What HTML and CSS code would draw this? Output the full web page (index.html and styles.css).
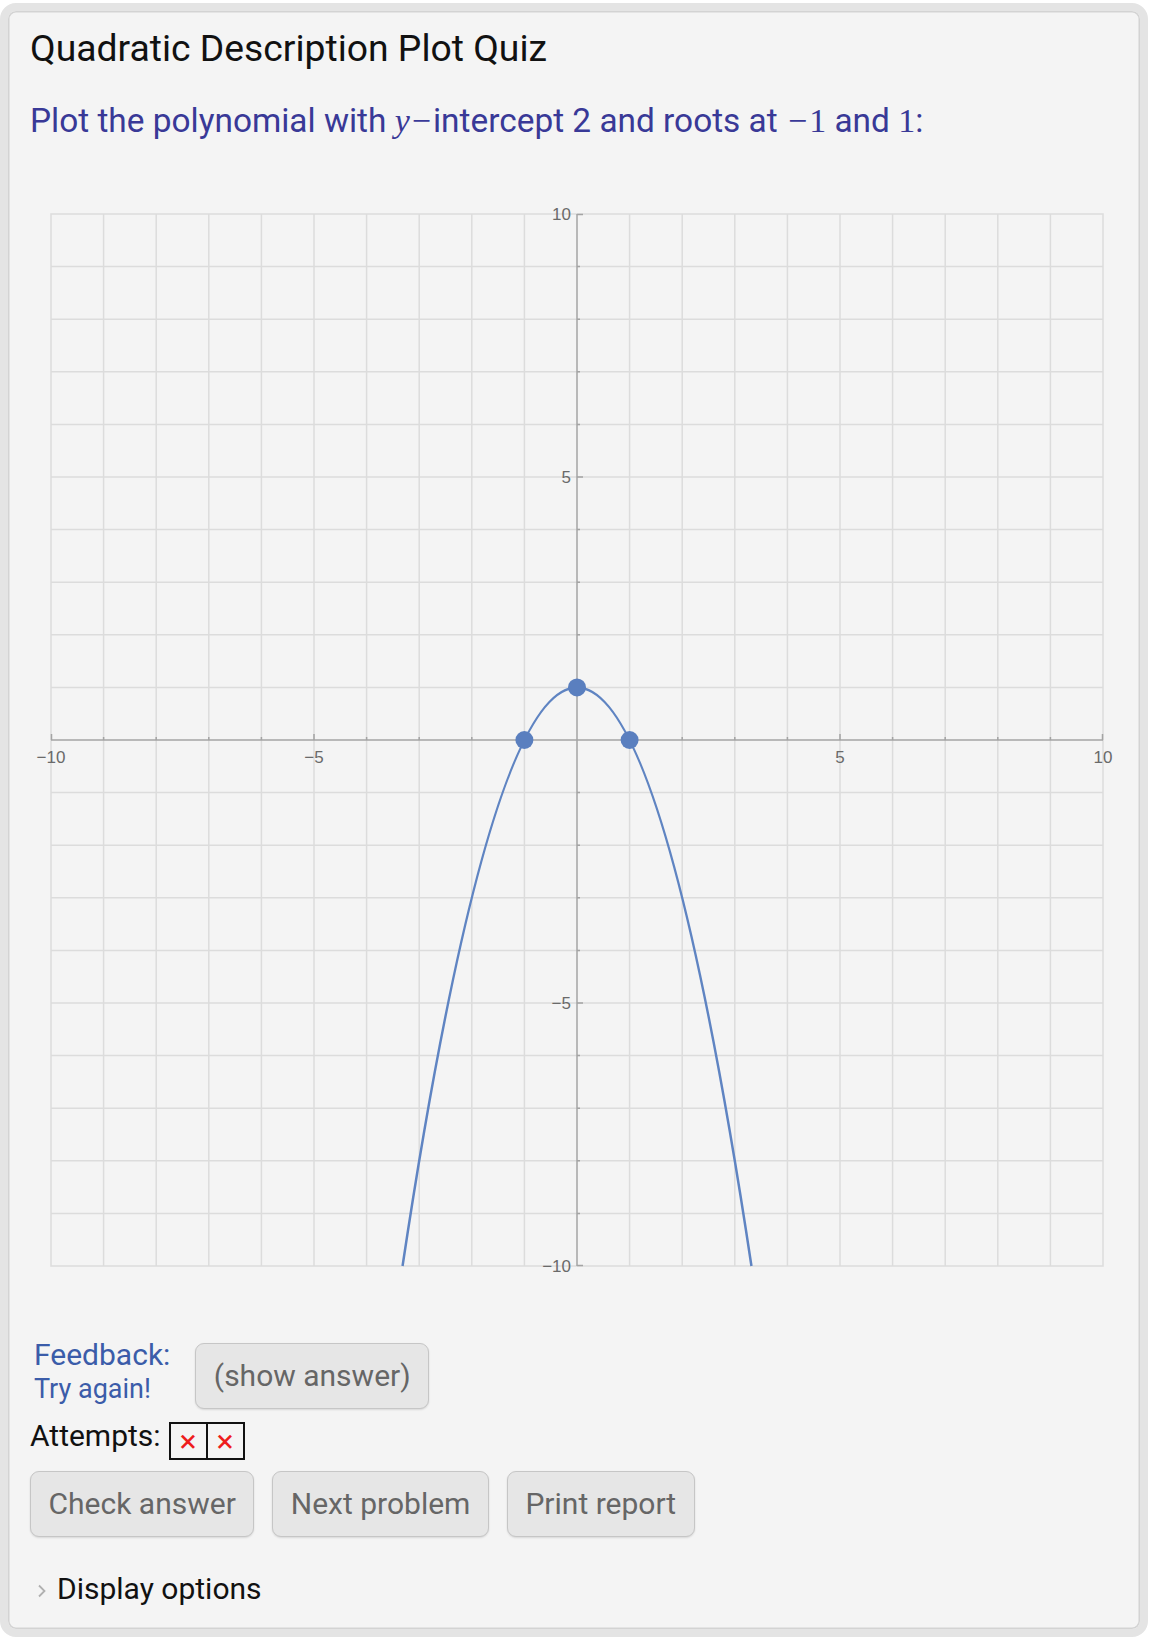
FILE: index.html
```html
<!DOCTYPE html>
<html lang="en">
<head>
  <meta charset="UTF-8" />
  <title>Quadratic Description Plot Quiz</title>
  <link rel="stylesheet" href="styles.css">
</head>
<body>
  <div class="quiz">
    <h1 class="quiz-title">Quadratic Description Plot Quiz</h1>
    <p class="quiz-question">Plot the polynomial with <span class="math"><i>y</i><span class="minus">−</span></span>intercept 2 and roots at <span class="math"><span class="minus">−</span>1</span> and <span class="math">1</span>:</p>

    <!-- Plot: 20x20 units, 52.6px per unit, origin at (547, 545) -->
    <svg class="plot" width="1088" height="1085" viewBox="0 0 1088 1085">
      <rect x="21" y="19" width="1052" height="1052" fill="none" stroke="#dcdcdc" stroke-width="1.5"/>
      <path class="grid" d="M73.6 19V1071M126.2 19V1071M178.8 19V1071M231.4 19V1071M284 19V1071M336.6 19V1071M389.2 19V1071M441.8 19V1071M494.4 19V1071M599.6 19V1071M652.2 19V1071M704.8 19V1071M757.4 19V1071M810 19V1071M862.6 19V1071M915.2 19V1071M967.8 19V1071M1020.4 19V1071
        M21 71.6H1073M21 124.2H1073M21 176.8H1073M21 229.4H1073M21 282H1073M21 334.6H1073M21 387.2H1073M21 439.8H1073M21 492.4H1073M21 597.6H1073M21 650.2H1073M21 702.8H1073M21 755.4H1073M21 808H1073M21 860.6H1073M21 913.2H1073M21 965.8H1073M21 1018.4H1073"/>

      <!-- axes -->
      <path class="axis" d="M21 545H1073M547 19V1071"/>
      <!-- minor ticks -->
      <path class="axis" d="M73.6 545v-3M126.2 545v-3M178.8 545v-3M231.4 545v-3M336.6 545v-3M389.2 545v-3M441.8 545v-3M494.4 545v-3M599.6 545v-3M652.2 545v-3M704.8 545v-3M757.4 545v-3M862.6 545v-3M915.2 545v-3M967.8 545v-3M1020.4 545v-3
        M547 71.6h3M547 124.2h3M547 176.8h3M547 229.4h3M547 334.6h3M547 387.2h3M547 439.8h3M547 492.4h3M547 597.6h3M547 650.2h3M547 702.8h3M547 755.4h3M547 860.6h3M547 913.2h3M547 965.8h3M547 1018.4h3"/>
      <!-- major ticks -->
      <path class="axis" d="M21.5 545v-6M284 545v-6M810 545v-6M1072.5 545v-6M547 19.5h6M547 282h6M547 808h6M547 1070.5h6"/>

      <g class="tick-label x-label">
        <text x="21" y="568">−10</text>
        <text x="284" y="568">−5</text>
        <text x="810" y="568">5</text>
        <text x="1073" y="568">10</text>
      </g>
      <g class="tick-label y-label">
        <text x="541" y="25">10</text>
        <text x="541" y="288">5</text>
        <text x="541" y="814">−5</text>
        <text x="541" y="1077">−10</text>
      </g>

      <!-- answer curve y = 1 - x^2, clipped at y = -10 -->
      <path class="curve" d="M372.55 1071Q547 -86.2 721.45 1071"/>
      <circle class="pt" cx="494.4" cy="545" r="9"/>
      <circle class="pt" cx="599.6" cy="545" r="9"/>
      <circle class="pt" cx="547" cy="492.4" r="9"/>
    </svg>

    <div class="feedback-row">
      <div class="feedback">
        <div class="feedback-label">Feedback:</div>
        <div class="feedback-msg">Try again!</div>
      </div>
      <button class="btn btn-show">(show answer)</button>
    </div>

    <div class="attempts-row">
      <span class="attempts-label">Attempts:</span>
      <div class="attempts">
        <span class="attempt">×</span>
        <span class="attempt">×</span>
      </div>
    </div>

    <div class="actions">
      <button class="btn">Check answer</button>
      <button class="btn">Next problem</button>
      <button class="btn">Print report</button>
    </div>

    <div class="display-options">
      <svg class="chevron" width="10" height="14" viewBox="0 0 10 14">
        <path d="M2 1.5L7.5 7L2 12.5" fill="none" stroke="#b0b0b0" stroke-width="1.8"/>
      </svg>
      <span>Display options</span>
    </div>
  </div>
</body>
</html>
```

FILE: styles.css
```css
body {
  margin: 0;
  background-color: #fff;
  font-family: Roboto, 'Liberation Sans', sans-serif;
  color: #111;
}

/* Outer quiz panel */
.quiz {
  width: 1148px;
  margin-top: 3px;
  box-sizing: border-box;
  border: 8px solid #e4e4e4;
  border-radius: 16px;
  box-shadow: inset 0 0 0 1.5px #d3d3d3;
  background-color: #f4f4f4;
  padding: 15px 22px 22px;
}

.quiz-title {
  margin: 0;
  font-size: 37.3px;
  line-height: 44px;
  font-weight: 400;
  color: #111;
}

.quiz-question {
  margin: 33px 0 0;
  font-size: 33.4px;
  line-height: 36px;
  color: #393997;
}

.math {
  font-family: 'Liberation Serif', serif;
  font-size: 34px;
}

.minus {
  margin: 0 2px;
}

/* Plot */
.plot {
  display: block;
  margin-top: 56px;
}

.grid {
  fill: none;
  stroke: #dcdcdc;
  stroke-width: 1.5;
}

.axis {
  fill: none;
  stroke: #a4a4a4;
  stroke-width: 1.5;
}

.tick-label {
  font-family: 'Liberation Sans', Arial, sans-serif;
  font-size: 17px;
  fill: #6a6a6a;
}

.x-label {
  text-anchor: middle;
}

.y-label {
  text-anchor: end;
}

.curve {
  fill: none;
  stroke: #5f84c2;
  stroke-width: 2.5;
}

.pt {
  fill: #5a7fbf;
}

/* Feedback */
.feedback-row {
  display: flex;
  align-items: flex-start;
  gap: 25px;
  margin-top: 58px;
}

.feedback {
  padding-left: 4px;
  color: #3b5ca9;
}

.feedback-label {
  font-size: 30px;
  line-height: 34px;
}

.feedback-msg {
  font-size: 27px;
  line-height: 34px;
}

.btn {
  height: 66px;
  box-sizing: border-box;
  padding: 0 17.5px;
  font-family: Roboto, 'Liberation Sans', sans-serif;
  font-size: 30px;
  line-height: 36px;
  color: #666;
  background-color: #e6e6e6;
  border: 1.5px solid #c6c6c6;
  border-radius: 9px;
  box-shadow: 0 1px 2px rgba(0,0,0,0.12);
  cursor: pointer;
}

.btn-show {
  margin-top: 5px;
}

/* Attempts */
.attempts-row {
  display: flex;
  align-items: flex-start;
  gap: 8px;
  margin-top: 9px;
}

.attempts-label {
  font-size: 30px;
  line-height: 36px;
}

.attempts {
  display: flex;
  margin-top: 4px;
  border: 2px solid #111;
}

.attempt {
  width: 35px;
  height: 34px;
  display: flex;
  align-items: center;
  justify-content: center;
  font-size: 32px;
  line-height: 34px;
  color: #ee1c1c;
}

.attempt + .attempt {
  border-left: 2px solid #111;
}

/* Buttons */
.actions {
  display: flex;
  gap: 18px;
  margin-top: 11px;
}

.display-options {
  display: flex;
  align-items: center;
  gap: 10px;
  margin-top: 34px;
  padding-left: 7px;
  font-size: 30px;
  line-height: 36px;
}

.chevron {
  margin-top: 4px;
}
```
